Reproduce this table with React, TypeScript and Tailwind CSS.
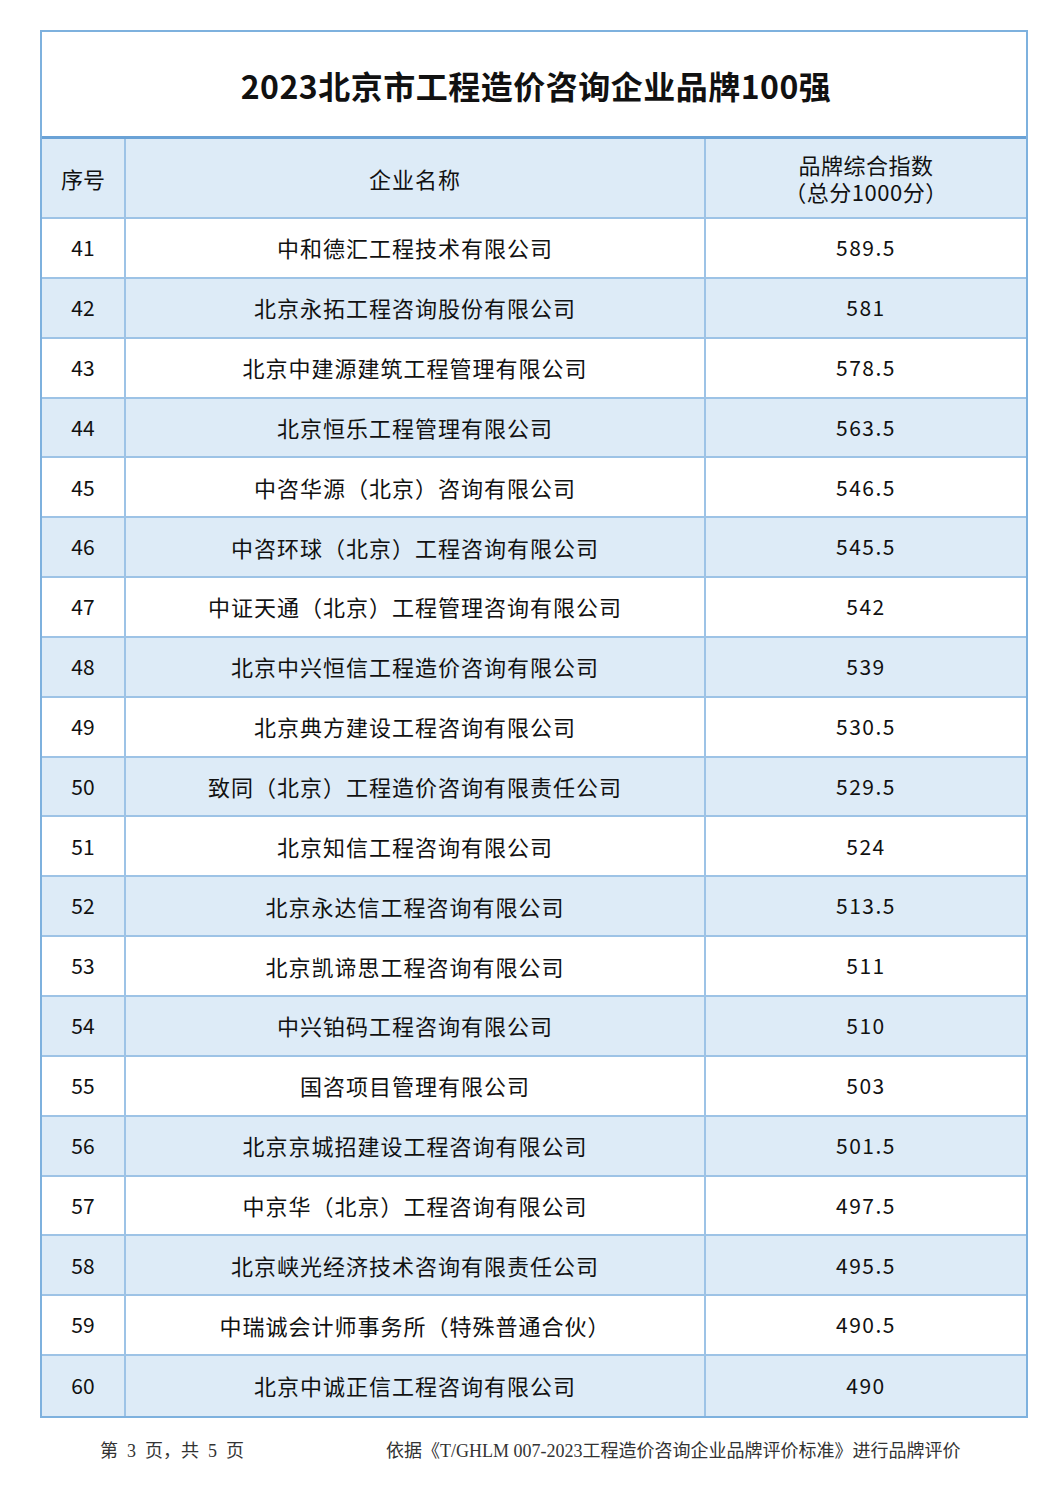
import React from 'react'

const rows: [number, string, string][] = [
  [41, '中和德汇工程技术有限公司', '589.5'],
  [42, '北京永拓工程咨询股份有限公司', '581'],
  [43, '北京中建源建筑工程管理有限公司', '578.5'],
  [44, '北京恒乐工程管理有限公司', '563.5'],
  [45, '中咨华源（北京）咨询有限公司', '546.5'],
  [46, '中咨环球（北京）工程咨询有限公司', '545.5'],
  [47, '中证天通（北京）工程管理咨询有限公司', '542'],
  [48, '北京中兴恒信工程造价咨询有限公司', '539'],
  [49, '北京典方建设工程咨询有限公司', '530.5'],
  [50, '致同（北京）工程造价咨询有限责任公司', '529.5'],
  [51, '北京知信工程咨询有限公司', '524'],
  [52, '北京永达信工程咨询有限公司', '513.5'],
  [53, '北京凯谛思工程咨询有限公司', '511'],
  [54, '中兴铂码工程咨询有限公司', '510'],
  [55, '国咨项目管理有限公司', '503'],
  [56, '北京京城招建设工程咨询有限公司', '501.5'],
  [57, '中京华（北京）工程咨询有限公司', '497.5'],
  [58, '北京峡光经济技术咨询有限责任公司', '495.5'],
  [59, '中瑞诚会计师事务所（特殊普通合伙）', '490.5'],
  [60, '北京中诚正信工程咨询有限公司', '490'],
]

const latin = { fontFamily: '"Liberation Serif", serif' }

export default function App() {
  return (
    <div
      className="w-[1061px] min-h-[1500px] bg-white text-[#111] pt-[30px] pl-[40px]"
      style={{ fontFamily: '"Noto Sans CJK SC", "Noto Sans", sans-serif' }}
    >
      <div className="w-[988px] border-2 border-[#7eb1de]">
        {/* title */}
        <div className="h-[107px] flex items-center justify-center border-b-[3px] border-[#6aa2d6]">
          <h1 className="text-[32px] font-bold tracking-[0.5px] pl-[4px] pt-[2px]">2023北京市工程造价咨询企业品牌100强</h1>
        </div>

        {/* header */}
        <div className="grid grid-cols-[84px_580px_1fr] h-[80px] bg-[#ddebf7] border-b-2 border-[#9dc3e6] text-[22px]">
          <div className="flex items-center justify-center border-r-2 border-[#9dc3e6]">序号</div>
          <div className="flex items-center justify-center border-r-2 border-[#9dc3e6] tracking-[1px]">企业名称</div>
          <div className="flex items-center justify-center">
            <p className="text-center leading-[27px] tracking-[0.5px]">
              品牌综合指数
              <br />
              （总分1000分）
            </p>
          </div>
        </div>

        {/* rows */}
        {rows.map(([no, name, score], i) => (
          <div
            key={no}
            className={
              'grid grid-cols-[84px_580px_1fr] h-[59.85px] text-[22px] ' +
              (i % 2 === 1 ? 'bg-[#ddebf7] ' : 'bg-white ') +
              (i < rows.length - 1 ? 'border-b-2 border-[#9dc3e6]' : '')
            }
          >
            <div className="flex items-center justify-center border-r-2 border-[#9dc3e6] text-[21px]">{no}</div>
            <div className="flex items-center justify-center border-r-2 border-[#9dc3e6] tracking-[1px]">{name}</div>
            <div className="flex items-center justify-center text-[21px] tracking-[1.5px]">{score}</div>
          </div>
        ))}
      </div>

      {/* footer */}
      <div
        className="flex text-[18px] text-[#333] mt-[20px]"
        style={{ fontFamily: '"Liberation Serif", "Noto Sans CJK SC", serif' }}
      >
        <span className="ml-[60px]">
          第<span className="px-[9px]" style={latin}>3</span>页，共<span className="px-[9px]" style={latin}>5</span>页
        </span>
        <span className="ml-[142px]">
          依据《<span style={latin}>T/GHLM 007-2023</span>工程造价咨询企业品牌评价标准》进行品牌评价
        </span>
      </div>
    </div>
  )
}
